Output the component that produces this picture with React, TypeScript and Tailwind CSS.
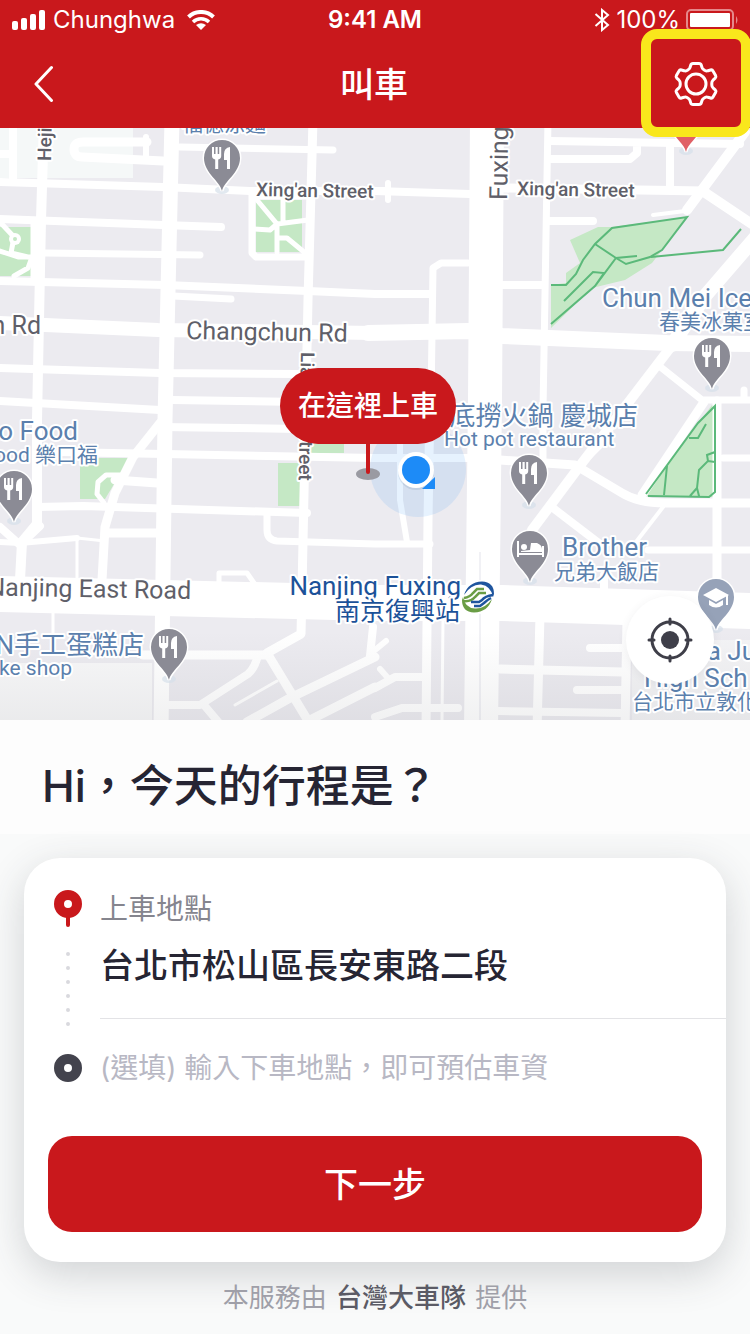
import type { ReactNode } from "react";

type Road = [width: number, d: string];

const roads: Road[] = [
  // north-south
  [10, "M44 120L41 220L37 420V524L22 542L20 580"],
  [15, "M172 120L165 420L161 730"],
  [9, "M313 120L308 300L302 590L301 634L267 653L310 724"],
  [34, "M487 120L485 400L481 730"],
  [7, "M548 120L543 410V466"],
  [7, "M468 263H441L433 268L431 400"],
  [9, "M430 400L428 520L426 730"],
  [6, "M400 440V500L407 542"],
  [8, "M670 143V187"],
  [9, "M717 401V590"],
  [9, "M540 615L537 730"],
  [9, "M627 620L625 730"],
  [3, "M443 620L442 720"],
  [9, "M160 423L133 457L115 493L105 527L102 580"],
  [8, "M373 627L370 656"],
  // east-west
  [8, "M0 182L163 187L250 191H375L470 194"],
  [9, "M500 188L705 191"],
  [7, "M180 147L333 150"],
  [8, "M0 219L163 225L221 227"],
  [7, "M45 253L200 255"],
  [8, "M0 281L165 285L308 291L375 294H432"],
  [7, "M173 296L231 299"],
  [14, "M0 323L158 330L375 333"],
  [16, "M368 333L468 331L502 336L667 343L750 344"],
  [8, "M0 368L160 373L300 374"],
  [8, "M0 401L160 410"],
  [8, "M172 400L300 402"],
  [8, "M160 427L300 429"],
  [8, "M60 452L375 458H475"],
  [9, "M115 480L157 483"],
  [8, "M37 507L83 506L307 513"],
  [9, "M108 533H157"],
  [7, "M267 515V530Q267 540 277 541L375 544H430"],
  [6, "M0 542L20 543L77 538"],
  [3, "M77 538V578M77 538L105 541M53 611V633"],
  [8, "M0 527L20 545L40 526"],
  [36, "M0 594L375 603H502L750 611"],
  [5, "M219 583V573H247L254 583"],
  [9, "M143 655H267"],
  [8, "M258 655Q255 668 248 674L200 705H168M204 705L220 724"],
  [9, "M375 657L290 698L247 722"],
  [9, "M375 687L310 720"],
  [3, "M235 705L277 681"],
  [8, "M375 688L395 677H422M375 717L402 708H458"],
  [6, "M375 650L386 641M380 669L388 678"],
  // eastern side streets
  [8, "M550 221H593M500 285H543"],
  [8, "M550 141L740 144M550 159H630L637 153V143"],
  [10, "M745 132L687 210"],
  [4, "M653 215L685 211"],
  [10, "M704 192L755 226"],
  [14, "M755 238L705 296L672 345"],
  [10, "M670 348L628 403L582 463L532 530"],
  [7, "M658 365L702 400H750M744 390V400"],
  [9, "M704 402L642 495"],
  [9, "M500 460L575 465L622 493Q638 503 665 503H750"],
  [7, "M723 458H750M648 550H750M605 440L582 463"],
  [8, "M553 508L600 544"],
  [4, "M663 507L636 542"],
  [8, "M604 575V590"],
  [9, "M500 669L622 672"],
  [8, "M590 648H622M577 690H622M498 711L622 713"],
  // lanes around the north-west block
  [9, "M147 142H83Q74 142 74 149Q74 157 82 157L163 161"],
  [6, "M146 137V155"],
  [8, "M13 128V182M0 154H13"],
  [6, "M375 190H385M388 183V200"],
];

const parkPaths = [
  "M0 222L14 237L11 253L32 258M0 251L18 257L32 257L28 268L14 276",
  "M257 200L277 224L270 230L254 229M283 200V222M277 224L308 220M277 224V252M279 238H287L304 252",
];

const trails = [
  "M551 285H566L576 274L583 260L595 244L612 228L687 217L662 250L650 257L626 264L616 258L595 244",
  "M551 324L595 286L616 258L637 256M564 301L593 272L604 273L595 286M651 257L723 250L741 229",
  "M646 494L698 423L715 406V492L709 497L648 496M664 495L667 466M689 438H698L706 424M715 452L707 455L708 461L699 470L697 488L690 496M697 488L699 496M708 461L715 462",
];

function Pin({ x, y, color = "#8b8b95", children }: { x: number; y: number; color?: string; children?: ReactNode }) {
  return (
    <g transform={`translate(${x} ${y})`}>
      <ellipse cy="32" rx="7" ry="4" fill="#d5dfe9" fillOpacity="0.7" />
      <path
        d="M0 33C-2 23-18 15-18 0A18 18 0 1 1 18 0C18 15 2 23 0 33Z"
        fill={color}
        stroke="#fff"
        strokeWidth="3"
        paintOrder="stroke"
      />
      {children}
    </g>
  );
}

function Utensils() {
  return (
    <g fill="#fff">
      <path d="M-10-11h2v7h1.500v-7h2.200v7h1.500v-7h2v9q0 2.500-3 3.500v9.500h-3v-9.500q-3.200-1-3.200-3.500Z" />
      <path d="M8-11V11H5V2H2V-4Q2-10 8-11Z" />
    </g>
  );
}

function CityMap() {
  return (
    <svg
      className="absolute inset-0 size-full"
      viewBox="0 128 750 592"
      preserveAspectRatio="xMidYMid slice"
      role="img"
      aria-label="地圖"
    >
      <defs>
        <linearGradient id="fade" x1="0" y1="0" x2="0" y2="1">
          <stop offset="0" stopColor="#50535a" stopOpacity="0" />
          <stop offset="1" stopColor="#50535a" stopOpacity="0.08" />
        </linearGradient>
      </defs>
      <rect y="128" width="750" height="592" fill="#ecebf0" />
      <path d="M0 128H133V178H0Z" fill="#f5f8f8" />
      <path d="M0 663H152V720H0Z" fill="#f8f8f9" />
      <path d="M632 640H750V720H632Z" fill="#f3f3f5" />

      <g fill="#c5e8c5">
        <path d="M0 227H33V276H0ZM256 200H302V252H256Z" />
        <path d="M570 240L598 227H612L687 217L662 250L652 263L625 280L592 288L551 328V285L566 283V273L580 263Z" />
        <path d="M646 494L712 405L715 407V497H648Z" />
        <path d="M80 458H130L105 499H80ZM278 463H300V506H278ZM310 440H344V453H310Z" />
      </g>

      <g fill="none" stroke="#fff" strokeLinecap="round" strokeLinejoin="round">
        {parkPaths.map((d) => (
          <path key={d} d={d} strokeWidth="5" />
        ))}
        <path d="M34 222V278M252 191V253L256 257H308M252 196H308" strokeWidth="7" />
        <path d="M120 475H106L98 482L97 494L104 503" strokeWidth="5" />
        {roads.map(([width, d]) => (
          <path key={d} d={d} strokeWidth={width} />
        ))}
      </g>
      <circle cx="15" cy="239" r="6" fill="#fff" />
      <circle cx="15" cy="239" r="2" fill="#c5e8c5" />
      <path d="M480 552V720" stroke="#f1f1f5" strokeWidth="2" />
      <g fill="none" stroke="#5bb97a" strokeWidth="2">
        {trails.map((d) => (
          <path key={d} d={d} />
        ))}
      </g>

      <rect y="632" width="750" height="88" fill="url(#fade)" />
      <circle cx="418" cy="469" r="48" fill="#1d8bf7" fillOpacity="0.11" />

      <Pin x={222} y={158}><Utensils /></Pin>
      <Pin x={712} y={356}><Utensils /></Pin>
      <Pin x={14} y={489}><Utensils /></Pin>
      <Pin x={529} y={473}><Utensils /></Pin>
      <Pin x={169} y={647}><Utensils /></Pin>
      <Pin x={686} y={119} color="#e06066" />
      <Pin x={530} y={549}>
        <path d="M-12-8v16M-12 5H13M13-3V8" stroke="#fff" strokeWidth="2" />
        <circle cx="-6" cy="-2" r="3" fill="#fff" />
        <path d="M-9 3V2L0 1L1-6H7Q12-4 12 0V3Z" fill="#fff" />
      </Pin>
      <Pin x={716} y={597} color="#96a2b8">
        <path d="M-13-2L0-9L13-2L0 5ZM-7 3L0 7L7 3V8Q0 13-7 8Z" fill="#fff" />
        <path d="M11-2V8" stroke="#fff" strokeWidth="2" />
      </Pin>

      <g
        stroke="#fff"
        strokeWidth="4"
        strokeLinejoin="round"
        paintOrder="stroke"
        className="font-[Roboto,'Noto_Sans_CJK_TC',sans-serif]"
      >
        <g fill="#5f5f69" fontSize="19" fontWeight="500">
          <text x="256" y="196" transform="rotate(1 256 196)">Xing'an Street</text>
          <text x="517" y="195" transform="rotate(1 517 195)">Xing'an Street</text>
          <text transform="translate(51 161) rotate(-89)">Hejiang</text>
          <text transform="translate(301 352) rotate(91)">Liaoning Street</text>
        </g>
        <g fill="#5f5f69" fontSize="25">
          <text x="186" y="339" transform="rotate(1 186 339)">Changchun Rd</text>
          <text x="41" y="334" textAnchor="end">Changchun Rd</text>
          <text x="191" y="599" textAnchor="end" transform="rotate(1 191 599)">Nanjing East Road</text>
          <text transform="translate(507 200) rotate(-89)">Fuxing North</text>
        </g>
        <g fill="#5b80ad" fontSize="26">
          <text x="602" y="307">Chun Mei Ice</text>
          <text x="638" y="425" textAnchor="end">海底撈火鍋 慶城店</text>
          <text x="78" y="440" textAnchor="end">Leko Food</text>
          <text x="144" y="654" textAnchor="end">N手工蛋糕店</text>
          <text x="562" y="556">Brother</text>
          <text x="756" y="660" textAnchor="end">Dunhua Ju</text>
          <text x="644" y="687">High Sch</text>
        </g>
        <g fill="#5b80ad" fontSize="21">
          <text x="182" y="131">福德涼麵</text>
          <text x="659" y="329">春美冰菓室</text>
          <text x="444" y="446">Hot pot restaurant</text>
          <text x="98" y="462" textAnchor="end">Food 樂口福</text>
          <text x="72" y="675" textAnchor="end">Cake shop</text>
          <text x="554" y="579">兄弟大飯店</text>
          <text x="632" y="709">台北市立敦化</text>
        </g>
        <g fill="#1c5299">
          <text x="461" y="595" textAnchor="end" fontSize="26">Nanjing Fuxing</text>
          <text x="460" y="620" textAnchor="end" fontSize="25">南京復興站</text>
        </g>
      </g>

      {/* metro logo */}
      <g transform="translate(478 597)" fill="none">
        <circle r="17" fill="#fff" />
        <path d="M-14-2Q-10-15 4-15.500Q16-15 16 -3L15 0Q13-11 3-12.500Q-7-13-14-2Z" fill="#1f559e" />
        <path d="M14 2Q10 15-4 15.500Q-16 15-16 3L-15 0Q-13 11-3 11.500Q7 12 14 2Z" fill="#6a9d45" />
        <path d="M-15 4Q-7 5-3 0L1-4H8M-14 1Q-8 0-5-4L-1-8H6" stroke="#6a9d45" strokeWidth="2.500" />
        <path d="M15-2Q7-1 4 3L1 5H-7M13 1Q9 3 6 6L2 9H-4" stroke="#1f559e" strokeWidth="2.500" />
      </g>

      {/* current position */}
      <circle cx="416" cy="472" r="18" fill="#4a6a90" fillOpacity="0.14" />
      <path d="M435 477V489H422Z" fill="#1d8bf7" />
      <circle cx="416" cy="470" r="18" fill="#fff" />
      <circle cx="416" cy="470" r="14" fill="#1d8bf7" />
    </svg>
  );
}

function StatusBar() {
  return (
    <div className="grid h-10 grid-cols-3 items-center px-3 font-[Inter,sans-serif] text-2xl leading-10">
      <div className="flex items-center gap-2">
        <svg width="33" height="20" viewBox="0 0 33 20" fill="#fff" aria-hidden="true">
          <rect y="11" width="6" height="9" rx="2" />
          <rect x="9" y="8" width="6" height="12" rx="2" />
          <rect x="18" y="4" width="6" height="16" rx="2" />
          <rect x="27" width="6" height="20" rx="2" />
        </svg>
        <span>Chunghwa</span>
        <svg className="ml-1" width="28" height="20" viewBox="0 0 28 20" fill="none" stroke="#fff" aria-hidden="true">
          <path d="M1.500 7A18 18 0 0 1 26.500 7" strokeWidth="4" />
          <path d="M6 12A11.500 11.500 0 0 1 22 12" strokeWidth="3.500" />
          <path d="M14 20L9 15Q14 11.500 19 15Z" fill="#fff" stroke="none" />
        </svg>
      </div>
      <time className="text-center font-semibold">9:41 AM</time>
      <div className="flex items-center justify-end gap-1.5">
        <svg width="16" height="24" viewBox="0 0 16 24" fill="none" stroke="#fff" strokeWidth="2" aria-hidden="true">
          <path d="M1.500 6L14 17L8 22V2L14 7L1.500 18" />
        </svg>
        <span>100%</span>
        <svg width="52" height="22" viewBox="0 0 52 22" aria-hidden="true">
          <rect x="1" y="1" width="46" height="20" rx="4" fill="none" stroke="#e5898b" strokeWidth="2" />
          <rect x="4" y="4" width="40" height="14" rx="1" fill="#fff" />
          <path d="M50 7Q53 11 50 15Z" fill="#e5898b" />
        </svg>
      </div>
    </div>
  );
}

function Header() {
  return (
    <header className="relative z-10 bg-[#c9181c] text-white">
      <StatusBar />
      <div className="grid h-22 grid-cols-[88px_1fr_88px] items-center pr-2.5">
        <button type="button" aria-label="返回" className="flex h-full items-center justify-center">
          <svg width="20" height="38" viewBox="0 0 20 38" fill="none" stroke="#fff" strokeWidth="3" strokeLinecap="round" strokeLinejoin="round">
            <path d="M17.500 2.500L2 19L17.500 35.500" />
          </svg>
        </button>
        <h1 className="pl-2 text-center text-[34px] font-medium">叫車</h1>
        <button type="button" aria-label="設定" className="relative flex h-full items-center justify-center">
          <svg width="48" height="48" viewBox="-24 -24 48 48" fill="none" stroke="#fff" strokeWidth="3" strokeLinejoin="round">
            <path d="M-3-20.500H3Q4.800-20.500 5.300-18.800L6-16.500Q6.500-15 8.200-14L9-13.500Q10.500-12.800 12-13.300L14.500-14Q16.200-14.500 17-13L19.600-8.500Q20.400-7 19.200-5.800L17-3.800Q15.800-2.600 15.800-1V1Q15.800 2.600 17 3.800L19.200 5.800Q20.400 7 19.600 8.500L17 13Q16.200 14.500 14.500 14L12 13.300Q10.500 12.800 9 13.500L8.200 14Q6.500 15 6 16.500L5.300 18.800Q4.800 20.500 3 20.500H-3Q-4.800 20.500-5.300 18.800L-6 16.500Q-6.500 15-8.200 14L-9 13.500Q-10.500 12.800-12 13.300L-14.500 14Q-16.200 14.500-17 13L-19.600 8.500Q-20.400 7-19.200 5.800L-17 3.800Q-15.800 2.600-15.800 1V-1Q-15.800-2.600-17-3.800L-19.200-5.800Q-20.400-7-19.600-8.500L-17-13Q-16.200-14.500-14.500-14L-12-13.300Q-10.500-12.800-9-13.500L-8.200-14Q-6.500-15-6-16.500L-5.300-18.800Q-4.800-20.500-3-20.500Z" />
            <circle r="10" />
          </svg>
          <span className="absolute -inset-x-[11px] -top-[11px] -bottom-[9px] rounded-2xl border-10 border-[#f9e71c]" />
        </button>
      </div>
    </header>
  );
}

function BookingCard() {
  return (
    <form className="mx-6 rounded-[36px] bg-white pb-[30px] pt-8 shadow-[0_12px_40px_rgba(50,55,65,0.2)]">
      <div className="flex items-start gap-[18px] pl-[30px]">
        <svg className="-mb-2" width="28" height="136" viewBox="0 0 28 136" aria-hidden="true">
          <path d="M14 24V35" stroke="#c9181c" strokeWidth="4" strokeLinecap="round" />
          <circle cx="14" cy="14" r="9" fill="none" stroke="#c9181c" strokeWidth="10" />
          <path d="M14 64V136" stroke="#d9d9de" strokeWidth="4" strokeLinecap="round" strokeDasharray="0 14" />
        </svg>
        <div className="min-w-0 flex-1 border-b border-[#e3e3e6] pb-7">
          <label htmlFor="pickup" className="block text-[28px] leading-[38px] text-[#85858e]">
            上車地點
          </label>
          <input
            id="pickup"
            defaultValue="台北市松山區長安東路二段"
            className="mt-3 block h-[50px] w-full text-[34px] font-medium text-[#262533] outline-none"
          />
        </div>
      </div>
      <div className="flex items-center gap-[18px] pl-[30px] pt-6">
        <svg width="28" height="28" viewBox="0 0 28 28" aria-hidden="true">
          <circle cx="14" cy="14" r="9" fill="none" stroke="#43434d" strokeWidth="10" />
        </svg>
        <input
          aria-label="下車地點"
          placeholder="(選填) 輸入下車地點，即可預估車資"
          className="h-[50px] min-w-0 flex-1 text-[28px] outline-none placeholder:text-[#b8b8c4]"
        />
      </div>
      <div className="px-6 pt-[43px]">
        <button type="submit" className="h-24 w-full rounded-3xl bg-[#c9181c] text-[34px] font-medium text-white">
          下一步
        </button>
      </div>
    </form>
  );
}

export default function App() {
  return (
    <div className="flex min-h-screen flex-col overflow-x-clip bg-[#f9fafa] font-[Inter,'Noto_Sans_CJK_TC',sans-serif]" lang="zh-Hant">
      <Header />
      <section className="relative h-[592px] overflow-hidden">
        <CityMap />
        <div className="absolute left-1/2 top-60 flex -translate-x-[95px] flex-col items-center">
          <p className="z-10 flex h-19 items-center rounded-full bg-[#c9181c] px-[18px] text-[28px] font-medium text-white">
            在這裡上車
          </p>
          <svg width="24" height="36" viewBox="0 0 24 36" aria-hidden="true">
            <ellipse cx="12" cy="30" rx="12" ry="6" fill="#9a9aa2" />
            <path d="M12 0V28" stroke="#c9181c" strokeWidth="4" strokeLinecap="round" />
          </svg>
        </div>
        <button
          type="button"
          aria-label="定位"
          className="absolute bottom-9 right-9 flex size-22 items-center justify-center rounded-full bg-white shadow-[0_2px_10px_rgba(60,60,80,0.08)]"
        >
          <svg width="46" height="46" viewBox="0 0 46 46" fill="none" stroke="#3f3f49" strokeWidth="3" strokeLinecap="round">
            <circle cx="23" cy="23" r="18" />
            <circle cx="23" cy="23" r="9" fill="#3f3f49" stroke="none" />
            <path d="M23 2V7M23 39V44M2 23H7M39 23H44" />
          </svg>
        </button>
      </section>
      <main className="flex-1">
        <h2 className="mb-6 bg-[#fdfdfd] px-[42px] pb-[18px] pt-9 text-[44px] font-medium leading-[60px] text-[#262533]">
          Hi，今天的行程是？
        </h2>
        <BookingCard />
      </main>
      <footer className="py-4 text-center text-[26px] leading-10 text-[#9f9fa8]">
        本服務由 <span className="mx-0.5 font-medium text-[#5b5b65]">台灣大車隊</span> 提供
      </footer>
    </div>
  );
}
